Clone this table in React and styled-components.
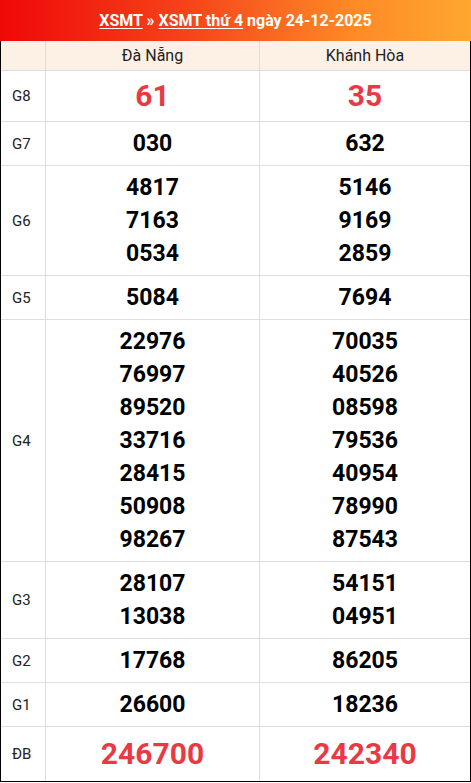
import styled, { createGlobalStyle } from "styled-components";

const GlobalStyle = createGlobalStyle`
  body {
    margin: 0;
    background: #fff;
    font-family: Roboto, "Liberation Sans", sans-serif;
  }
`;

const results = [
  { label: "G8", values: [["61"], ["35"]], kind: "g8" },
  { label: "G7", values: [["030"], ["632"]] },
  { label: "G6", values: [["4817", "7163", "0534"], ["5146", "9169", "2859"]] },
  { label: "G5", values: [["5084"], ["7694"]] },
  {
    label: "G4",
    values: [
      ["22976", "76997", "89520", "33716", "28415", "50908", "98267"],
      ["70035", "40526", "08598", "79536", "40954", "78990", "87543"],
    ],
  },
  { label: "G3", values: [["28107", "13038"], ["54151", "04951"]] },
  { label: "G2", values: [["17768"], ["86205"]] },
  { label: "G1", values: [["26600"], ["18236"]] },
  { label: "ĐB", values: [["246700"], ["242340"]], kind: "db" },
];

const App = () => {
  return (
    <>
      <GlobalStyle />
      <Board>
        <Title>
          <a>XSMT</a> » <a>XSMT thứ 4</a> ngày 24-12-2025
        </Title>
        <Grid>
          <HeadCell />
          <HeadCell>Đà Nẵng</HeadCell>
          <HeadCell $last>Khánh Hòa</HeadCell>
          {results.map((row) => (
            <Row key={row.label} row={row} />
          ))}
        </Grid>
      </Board>
    </>
  );
};

const Row = ({ row }) => (
  <>
    <Label>{row.label}</Label>
    {row.values.map((list, i) => (
      <NumCell key={i} $last={i === 1}>
        {list.map((n) => (
          <Num key={n} $kind={row.kind}>
            {n}
          </Num>
        ))}
      </NumCell>
    ))}
  </>
);

const Board = styled.div`
  width: 471px;
  box-sizing: border-box;
  border: 1px solid #000;
  border-top: none;
`;

const Title = styled.h1`
  margin: 0 -1px;
  height: 41px;
  line-height: 41px;
  text-align: center;
  background: linear-gradient(90deg, #ef0808 0%, #f6441a 40%, #fd8a26 75%, #ffa72f 100%);
  color: #fff;
  font-size: 16px;
  font-weight: 700;

  a {
    color: #fff;
    text-decoration: underline;
    text-underline-offset: 2px;
  }
`;

const Grid = styled.div`
  display: grid;
  grid-template-columns: 45px 214px 1fr;
`;

const Cell = styled.div`
  box-sizing: border-box;
  border-bottom: 1px solid #ddd;
  border-right: ${({ $last }) => ($last ? "none" : "1px solid #ddd")};
  &:nth-last-child(-n + 3) {
    border-bottom: none;
  }
`;

const HeadCell = styled(Cell)`
  height: 30px;
  background: #fdf1e6;
  display: flex;
  align-items: center;
  justify-content: center;
  color: #222;
  font-size: 16px;
`;

const Label = styled(Cell)`
  display: flex;
  align-items: center;
  padding-left: 11px;
  font-size: 15px;
  color: #222;
`;

const NumCell = styled(Cell)`
  padding: 5px 0;
  display: flex;
  flex-direction: column;
  align-items: center;
`;

const Num = styled.div`
  font-weight: 700;
  color: ${({ $kind }) => ($kind ? "#e83a45" : "#000")};
  font-size: ${({ $kind }) => ($kind === "db" ? "30px" : $kind === "g8" ? "30px" : "23px")};
  line-height: ${({ $kind }) => ($kind === "db" ? "44px" : $kind === "g8" ? "40px" : "33px")};
`;

export default App;
